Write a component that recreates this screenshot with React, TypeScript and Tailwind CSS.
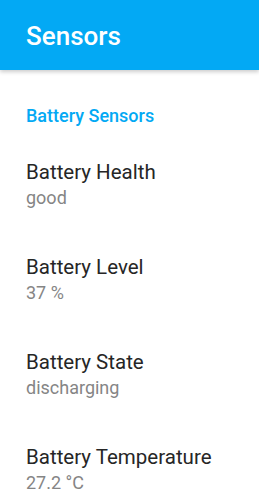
const items = [
  { title: "Battery Health", value: "good" },
  { title: "Battery Level", value: "37 %" },
  { title: "Battery State", value: "discharging" },
  { title: "Battery Temperature", value: "27.2 °C" },
];

export default function App() {
  return (
    <div className="min-h-[501px] w-[259px] overflow-hidden bg-white font-['Roboto',sans-serif]">
      <header className="flex h-[70px] items-center bg-[#03a9f4] px-[26px] pt-[2px] shadow-[0_2px_4px_rgba(0,0,0,0.2)]">
        <h1 className="text-[26px] font-medium leading-none text-white">Sensors</h1>
      </header>

      <div className="px-[26px] pt-[34px]">
        <p className="text-[18px] font-medium leading-[24px] text-[#03a9f4]">Battery Sensors</p>
        <ul className="mt-[32px] flex flex-col gap-[43px]">
          {items.map((it) => (
            <li key={it.title}>
              <p className="text-[20.5px] leading-[24px] text-[#262626]">{it.title}</p>
              <p className="text-[18px] leading-[28px] text-[#858585]">{it.value}</p>
            </li>
          ))}
        </ul>
      </div>
    </div>
  );
}
